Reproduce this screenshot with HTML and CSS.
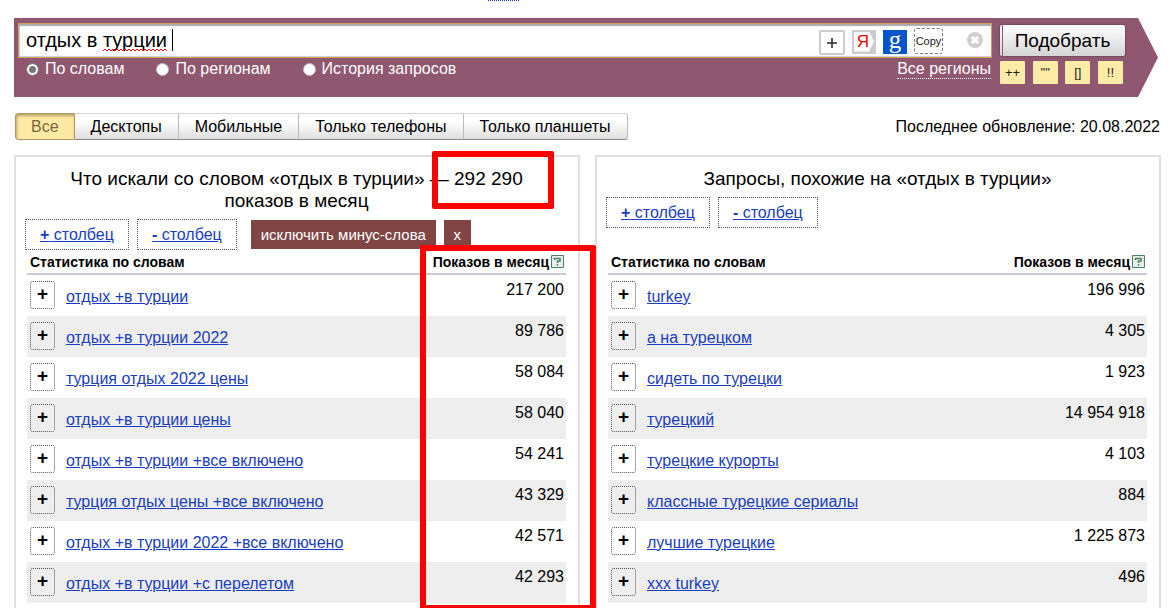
FILE: index.html
```html
<!DOCTYPE html>
<html lang="ru">
<head>
<meta charset="utf-8">
<title>Подбор слов</title>
<link rel="stylesheet" href="styles.css">
</head>
<body>
<div class="topline"><span class="topline-mark"></span></div>
<form class="search">
  <div class="field">
    <input class="query" type="text" aria-label="Запрос" value="отдых в турции" spellcheck="false">
    <svg class="squiggle" width="64" height="4" viewBox="0 0 64 4" aria-hidden="true"><path d="M0 3l2-2 2 2 2-2 2 2 2-2 2 2 2-2 2 2 2-2 2 2 2-2 2 2 2-2 2 2 2-2 2 2 2-2 2 2 2-2 2 2 2-2 2 2 2-2 2 2 2-2 2 2 2-2 2 2 2-2 2 2 2-2 2 2 2-2 2 2 2-2 2 2 2-2 2 2 2-2 2 2" fill="none" stroke="#f00"/></svg>
    <span class="caret"></span>
    <div class="tools">
      <button type="button" class="tool tool-plus" aria-label="Добавить"><svg width="12" height="12" viewBox="0 0 12 12"><path d="M1 6h10M6 1v10" stroke="#222" stroke-width="1.500"/></svg></button>
      <button type="button" class="tool tool-ya"><span>Я</span></button>
      <button type="button" class="tool tool-g">g</button>
      <button type="button" class="tool tool-copy">Copy</button>
      <button type="button" class="tool tool-clear" aria-label="Очистить"><svg width="16" height="16" viewBox="0 0 16 16"><circle cx="8" cy="8" r="8" fill="#d0d0d0"/><path d="M5 5l6 6M11 5l-6 6" stroke="#fff" stroke-width="3"/></svg></button>
    </div>
  </div>
  <button type="button" class="submit">Подобрать</button>
  <div class="options">
    <label><input type="radio" name="mode" checked>По словам</label>
    <label><input type="radio" name="mode">По регионам</label>
    <label><input type="radio" name="mode">История запросов</label>
    <a class="regions" href="#">Все регионы</a>
  </div>
  <div class="operators">
    <button type="button">++</button>
    <button type="button">""</button>
    <button type="button">[]</button>
    <button type="button">!!</button>
  </div>
</form>
<div class="bar">
  <div class="tabs">
    <button type="button" class="active">Все</button>
    <button type="button">Десктопы</button>
    <button type="button">Мобильные</button>
    <button type="button">Только телефоны</button>
    <button type="button">Только планшеты</button>
  </div>
  <div class="updated">Последнее обновление: 20.08.2022</div>
</div>
<main class="panels">
  <section class="panel">
    <h2>Что искали со словом «отдых в турции» — 292 290<br>показов в месяц</h2>
    <div class="actions">
      <a href="#" class="column"><b>+</b> столбец</a>
      <a href="#" class="column"><b>-</b> столбец</a>
      <button type="button" class="minus">исключить минус-слова</button>
      <button type="button" class="close">x</button>
    </div>
    <table>
      <thead><tr><th>Статистика по словам</th><th><span class="shows">Показов в месяц<svg width="13" height="13" viewBox="0 0 13 13"><path d="M.5.5h12v12H.5z" fill="#e6f0e8" stroke="#4d8060"/><path d="M3.500 5V3.500h5.500v2.500H6.500v2M6.500 9v1.500" fill="none" stroke="#4d8060" stroke-width="1.500"/></svg></span></th></tr></thead>
      <tbody>
        <tr><td><div class="phrase"><button type="button">+</button><a href="#">отдых +в турции</a></div></td><td>217 200</td></tr>
        <tr><td><div class="phrase"><button type="button">+</button><a href="#">отдых +в турции 2022</a></div></td><td>89 786</td></tr>
        <tr><td><div class="phrase"><button type="button">+</button><a href="#">турция отдых 2022 цены</a></div></td><td>58 084</td></tr>
        <tr><td><div class="phrase"><button type="button">+</button><a href="#">отдых +в турции цены</a></div></td><td>58 040</td></tr>
        <tr><td><div class="phrase"><button type="button">+</button><a href="#">отдых +в турции +все включено</a></div></td><td>54 241</td></tr>
        <tr><td><div class="phrase"><button type="button">+</button><a href="#">турция отдых цены +все включено</a></div></td><td>43 329</td></tr>
        <tr><td><div class="phrase"><button type="button">+</button><a href="#">отдых +в турции 2022 +все включено</a></div></td><td>42 571</td></tr>
        <tr><td><div class="phrase"><button type="button">+</button><a href="#">отдых +в турции +с перелетом</a></div></td><td>42 293</td></tr>
      </tbody>
    </table>
    <span class="mark mark-total"></span>
    <span class="mark mark-shows"></span>
  </section>
  <section class="panel">
    <h2>Запросы, похожие на «отдых в турции»</h2>
    <div class="actions">
      <a href="#" class="column"><b>+</b> столбец</a>
      <a href="#" class="column"><b>-</b> столбец</a>
    </div>
    <table>
      <thead><tr><th>Статистика по словам</th><th><span class="shows">Показов в месяц<svg width="13" height="13" viewBox="0 0 13 13"><path d="M.5.5h12v12H.5z" fill="#e6f0e8" stroke="#4d8060"/><path d="M3.500 5V3.500h5.500v2.500H6.500v2M6.500 9v1.500" fill="none" stroke="#4d8060" stroke-width="1.500"/></svg></span></th></tr></thead>
      <tbody>
        <tr><td><div class="phrase"><button type="button">+</button><a href="#">turkey</a></div></td><td>196 996</td></tr>
        <tr><td><div class="phrase"><button type="button">+</button><a href="#">а на турецком</a></div></td><td>4 305</td></tr>
        <tr><td><div class="phrase"><button type="button">+</button><a href="#">сидеть по турецки</a></div></td><td>1 923</td></tr>
        <tr><td><div class="phrase"><button type="button">+</button><a href="#">турецкий</a></div></td><td>14 954 918</td></tr>
        <tr><td><div class="phrase"><button type="button">+</button><a href="#">турецкие курорты</a></div></td><td>4 103</td></tr>
        <tr><td><div class="phrase"><button type="button">+</button><a href="#">классные турецкие сериалы</a></div></td><td>884</td></tr>
        <tr><td><div class="phrase"><button type="button">+</button><a href="#">лучшие турецкие</a></div></td><td>1 225 873</td></tr>
        <tr><td><div class="phrase"><button type="button">+</button><a href="#">xxx turkey</a></div></td><td>496</td></tr>
      </tbody>
    </table>
  </section>
</main>
</body>
</html>
```
FILE: styles.css
```css
* { box-sizing: border-box; }
body {
  margin: 0;
  height: 100vh;
  overflow: hidden;
  padding: 0 7px 0 14px;
  background: #fff;
  color: #000;
  font: 16px/18px "Liberation Sans", Arial, sans-serif;
}
button, input { font-family: inherit; margin: 0; }
button { padding: 0; color: #000; cursor: pointer; }
a { color: #1a3dc1; }

.topline { height: 18px; padding-left: 474px; }
.topline-mark { display: block; width: 31px; border-top: 1px dotted #1a3dc1; }

.search {
  display: grid;
  grid-template-columns: 1fr 125px;
  grid-template-rows: 35px auto;
  column-gap: 8px;
  row-gap: 1px;
  margin-right: 3px;
  padding: 5px 33px 13px 4px;
  background: #905770;
  clip-path: polygon(0 0, calc(100% - 20px) 0, 100% 50%, calc(100% - 20px) 100%, 0 100%);
}
.field {
  position: relative;
  display: flex;
  align-items: center;
  padding: 0 8px 0 7px;
  background: #fff;
  border: 1px solid #c9a15c;
  box-shadow: inset 0 2px 1px #aaa, inset 1px -1px 1px #ccc;
}
.query {
  flex: 1;
  min-width: 0;
  padding: 0;
  border: 0;
  outline: 0;
  background: none;
  font-size: 20px;
}
.squiggle { position: absolute; left: 84px; top: 24px; }
.caret { position: absolute; left: 153px; top: 5px; width: 1px; height: 22px; background: #000; }
.tools { display: flex; align-items: center; gap: 7px; }
.tool { display: flex; align-items: center; justify-content: center; background: #fff; border: 0; }
.tool-plus { width: 26px; height: 25px; border: 2px solid #ccc; border-radius: 2px; margin-top: 4px; }
.tool-ya {
  width: 24px;
  height: 24px;
  padding: 2px;
  background: #ccc;
  margin-top: 2px;
}
.tool-ya span {
  width: 20px;
  height: 20px;
  padding-right: 2px;
  background: #fff;
  clip-path: polygon(0 0, 75% 0, 100% 50%, 75% 100%, 0 100%);
  color: #f00;
  font: 17px/20px "Liberation Sans Narrow", "Liberation Sans", sans-serif;
}
.tool-g { width: 24px; height: 24px; background: #0455cc; color: #fff; font: 25px/18px "Liberation Serif", serif; padding-bottom: 4px; margin-top: 2px; }
.tool-copy { width: 29px; height: 26px; border: 1px dashed #777; border-radius: 3px; font-size: 11px; color: #222; }
.tool-clear { width: 16px; height: 16px; margin-left: 17px; margin-bottom: 2px; background: none; }

.submit {
  position: relative;
  align-self: center;
  height: 31px;
  border: 0;
  border-radius: 2px;
  background: linear-gradient(#fff, #d4d4d4);
  box-shadow: 0 0 2px #333;
  font-size: 19px;
}
.submit::before { content: ""; position: absolute; left: 2px; top: 0; bottom: 0; width: 1px; background: #905770; }

.options { display: flex; align-items: flex-start; color: #fff; padding: 1px 0 0 8px; }
.options label { display: flex; align-items: center; gap: 6px; margin-right: 32px; white-space: nowrap; }
.options input { appearance: none; width: 13px; height: 13px; border-radius: 50%; background: #fff; border: 1px solid #bbb; }
.options input:checked { background: #777; border-color: #888; box-shadow: inset 0 0 0 2px #fff; }
.regions { margin: 0 1px 0 auto; height: 19px; color: #fff; text-decoration: none; border-bottom: 1px dotted #fff; }
.operators { display: flex; justify-content: space-between; padding: 2px 2px 0 0; }
.operators button { width: 25px; height: 23px; border: 0; border-radius: 1px; background: #ffeba8; font-size: 13px; color: #222; }

.bar { display: flex; justify-content: space-between; align-items: center; padding: 16px 1px 15px; }
.tabs { display: flex; }
.tabs button {
  height: 27px;
  padding: 0 16px;
  border: 1px solid #bbb;
  border-left: 0;
  border-top-color: #d5d5d5;
  border-bottom-color: #888;
  background: linear-gradient(#fff 30%, #dedede);
  font-size: 16px;
}
.tabs .active {
  padding: 0 15px;
  border: 1px solid #aa9868;
  border-radius: 3px 0 0 3px;
  background: #ffe9a5;
  box-shadow: inset 1px 2px 3px #b8a468;
  color: #75683f;
}
.tabs button:last-child { border-radius: 0 3px 3px 0; }

.panels { display: grid; grid-template-columns: 1fr 1fr; gap: 15px; }
.panel {
  position: relative;
  display: flex;
  flex-direction: column;
  padding: 11px 12px 12px 11px;
  border: 2px solid #e0e0e0;
}
h2 { margin: 0; font-size: 19px; line-height: 22px; font-weight: 400; text-align: center; }
.actions { display: flex; align-items: center; gap: 8px; margin: 7px 0 0 -2px; }
.column { padding: 6px 14px; border: 1px dotted #555; line-height: 17px; white-space: nowrap; }
.minus, .close { height: 29px; border: 0; background: #824545; color: #fff; font-size: 15px; white-space: nowrap; }
.minus { margin-left: 6px; padding: 0 10px; }
.close { width: 27px; }

table { width: 100%; margin-top: auto; border-collapse: separate; border-spacing: 0; }
th { padding: 0 3px; height: 25px; border-bottom: 2px solid #d0c8d8; font-size: 14px; text-align: left; }
th:last-child { text-align: right; padding-right: 2px; }
.shows { display: inline-flex; align-items: center; gap: 2px; }
td { height: 41px; padding: 0; vertical-align: top; }
td:last-child { padding: 6px 2px 0; text-align: right; white-space: nowrap; }
tbody tr:nth-child(even) { background: #eee; }
.phrase { display: flex; align-items: center; gap: 11px; padding: 6px 3px 0; }
.phrase a { padding-top: 4px; }
.phrase button { width: 25px; height: 28px; padding-bottom: 3px; border: 1px dotted #555; border-radius: 3px; background: none; font-size: 19px; font-weight: 700; line-height: 20px; }

.mark { position: absolute; border: 6px solid #f00; border-radius: 2px; pointer-events: none; }
.mark-total { top: -6px; right: 24px; width: 122px; height: 58px; }
.mark-shows { top: 88px; right: -18px; bottom: 4px; width: 176px; z-index: 1; }
```
